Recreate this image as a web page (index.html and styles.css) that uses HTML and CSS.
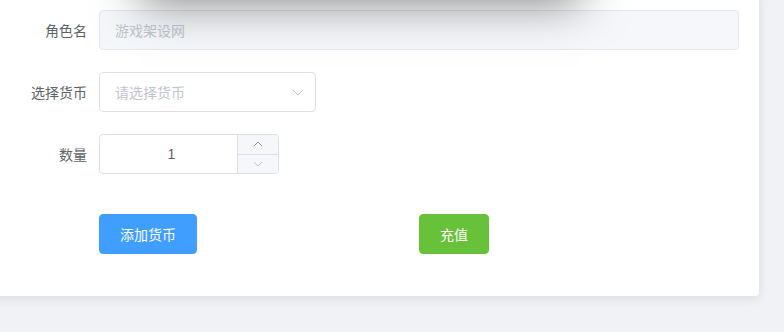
FILE: index.html
```html
<!DOCTYPE html>
<html lang="zh-CN">
<head>
<meta charset="utf-8">
<title>充值</title>
<link rel="stylesheet" href="styles.css">
</head>
<body>
<div class="overlay-shadow"></div>
<div class="page">
  <div class="card">
    <form class="form">
      <div class="form-item">
        <label class="form-label">角色名</label>
        <div class="form-content">
          <div class="input is-disabled"><span class="input-text">游戏架设网</span></div>
        </div>
      </div>
      <div class="form-item">
        <label class="form-label">选择货币</label>
        <div class="form-content">
          <div class="input select">
            <span class="placeholder">请选择货币</span>
            <svg class="select-arrow" width="14" height="14" viewBox="0 0 14 14"><path d="M2 5 L7 10 L12 5" fill="none" stroke="#c0c4cc" stroke-width="1"/></svg>
          </div>
        </div>
      </div>
      <div class="form-item">
        <label class="form-label">数量</label>
        <div class="form-content">
          <div class="input-number">
            <div class="number-value">1</div>
            <div class="number-controls">
              <span class="number-up"><svg width="12" height="12" viewBox="0 0 12 12"><path d="M2 8 L6 4 L10 8" fill="none" stroke="#909399" stroke-width="1"/></svg></span>
              <span class="number-down"><svg width="12" height="12" viewBox="0 0 12 12"><path d="M2 4 L6 8 L10 4" fill="none" stroke="#c0c4cc" stroke-width="1"/></svg></span>
            </div>
          </div>
        </div>
      </div>
      <div class="form-item actions">
        <div class="form-label"></div>
        <div class="form-content row">
          <div class="col"><button type="button" class="btn btn-primary">添加货币</button></div>
          <div class="col"><button type="button" class="btn btn-success">充值</button></div>
        </div>
      </div>
    </form>
  </div>
</div>
</body>
</html>
```
FILE: styles.css
```css
html, body {
  margin: 0;
  padding: 0;
}
body {
  background: #f0f2f5;
  font-family: "Noto Sans CJK SC", "Liberation Sans", sans-serif;
  font-size: 14px;
  color: #606266;
  height: 332px;
  overflow: hidden;
  position: relative;
}
.overlay-shadow {
  position: absolute;
  left: 140px;
  top: -200px;
  width: 440px;
  height: 194px;
  background: #fff;
  box-shadow: 0 8px 44px rgba(0, 0, 0, 0.5);
  z-index: 10;
}
.card {
  margin: -10px 0 0 -21px;
  width: 780px;
  box-sizing: border-box;
  background: #fff;
  border-radius: 4px;
  box-shadow: 0 2px 12px 0 rgba(0, 0, 0, 0.1);
  padding: 20px;
}
.form-item {
  display: flex;
  align-items: flex-start;
  margin-bottom: 22px;
}
.form-item.actions {
  margin-top: 40px;
}
.form-label {
  width: 100px;
  box-sizing: border-box;
  padding-right: 12px;
  text-align: right;
  line-height: 40px;
  font-size: 14px;
  color: #606266;
  flex-shrink: 0;
}
.form-content {
  width: 640px;
}
.input {
  box-sizing: border-box;
  height: 40px;
  border: 1px solid #dcdfe6;
  border-radius: 4px;
  padding: 0 15px;
  display: flex;
  align-items: center;
  background: #fff;
}
.input.is-disabled {
  background: #f5f7fa;
  border-color: #e4e7ed;
  color: #c0c4cc;
}
.input-text {
  color: #c0c4cc;
}
.select {
  width: 217px;
  justify-content: space-between;
  padding-right: 10px;
}
.placeholder {
  color: #c0c4cc;
}
.select-arrow {
  display: block;
}
.input-number {
  width: 180px;
  height: 40px;
  box-sizing: border-box;
  border: 1px solid #dcdfe6;
  border-radius: 4px;
  display: flex;
  overflow: hidden;
}
.number-value {
  flex: 1;
  text-align: center;
  line-height: 38px;
  font-family: "Liberation Sans", "Noto Sans CJK SC", sans-serif;
  color: #606266;
  padding: 0 9px 0 15px;
}
.number-controls {
  width: 40px;
  border-left: 1px solid #dcdfe6;
  background: #f5f7fa;
  display: flex;
  flex-direction: column;
}
.number-up, .number-down {
  flex: 1;
  display: flex;
  align-items: center;
  justify-content: center;
}
.number-up {
  border-bottom: 1px solid #dcdfe6;
}
.row {
  display: flex;
}
.col {
  width: 320px;
}
.btn {
  height: 40px;
  padding: 0 20px;
  border: 1px solid transparent;
  border-radius: 4px;
  font-family: "Noto Sans CJK SC", "Liberation Sans", sans-serif;
  font-size: 14px;
  color: #fff;
  cursor: pointer;
  line-height: 1;
}
.btn-primary {
  background: #409eff;
  border-color: #409eff;
}
.btn-success {
  background: #67c23a;
  border-color: #67c23a;
}
```
